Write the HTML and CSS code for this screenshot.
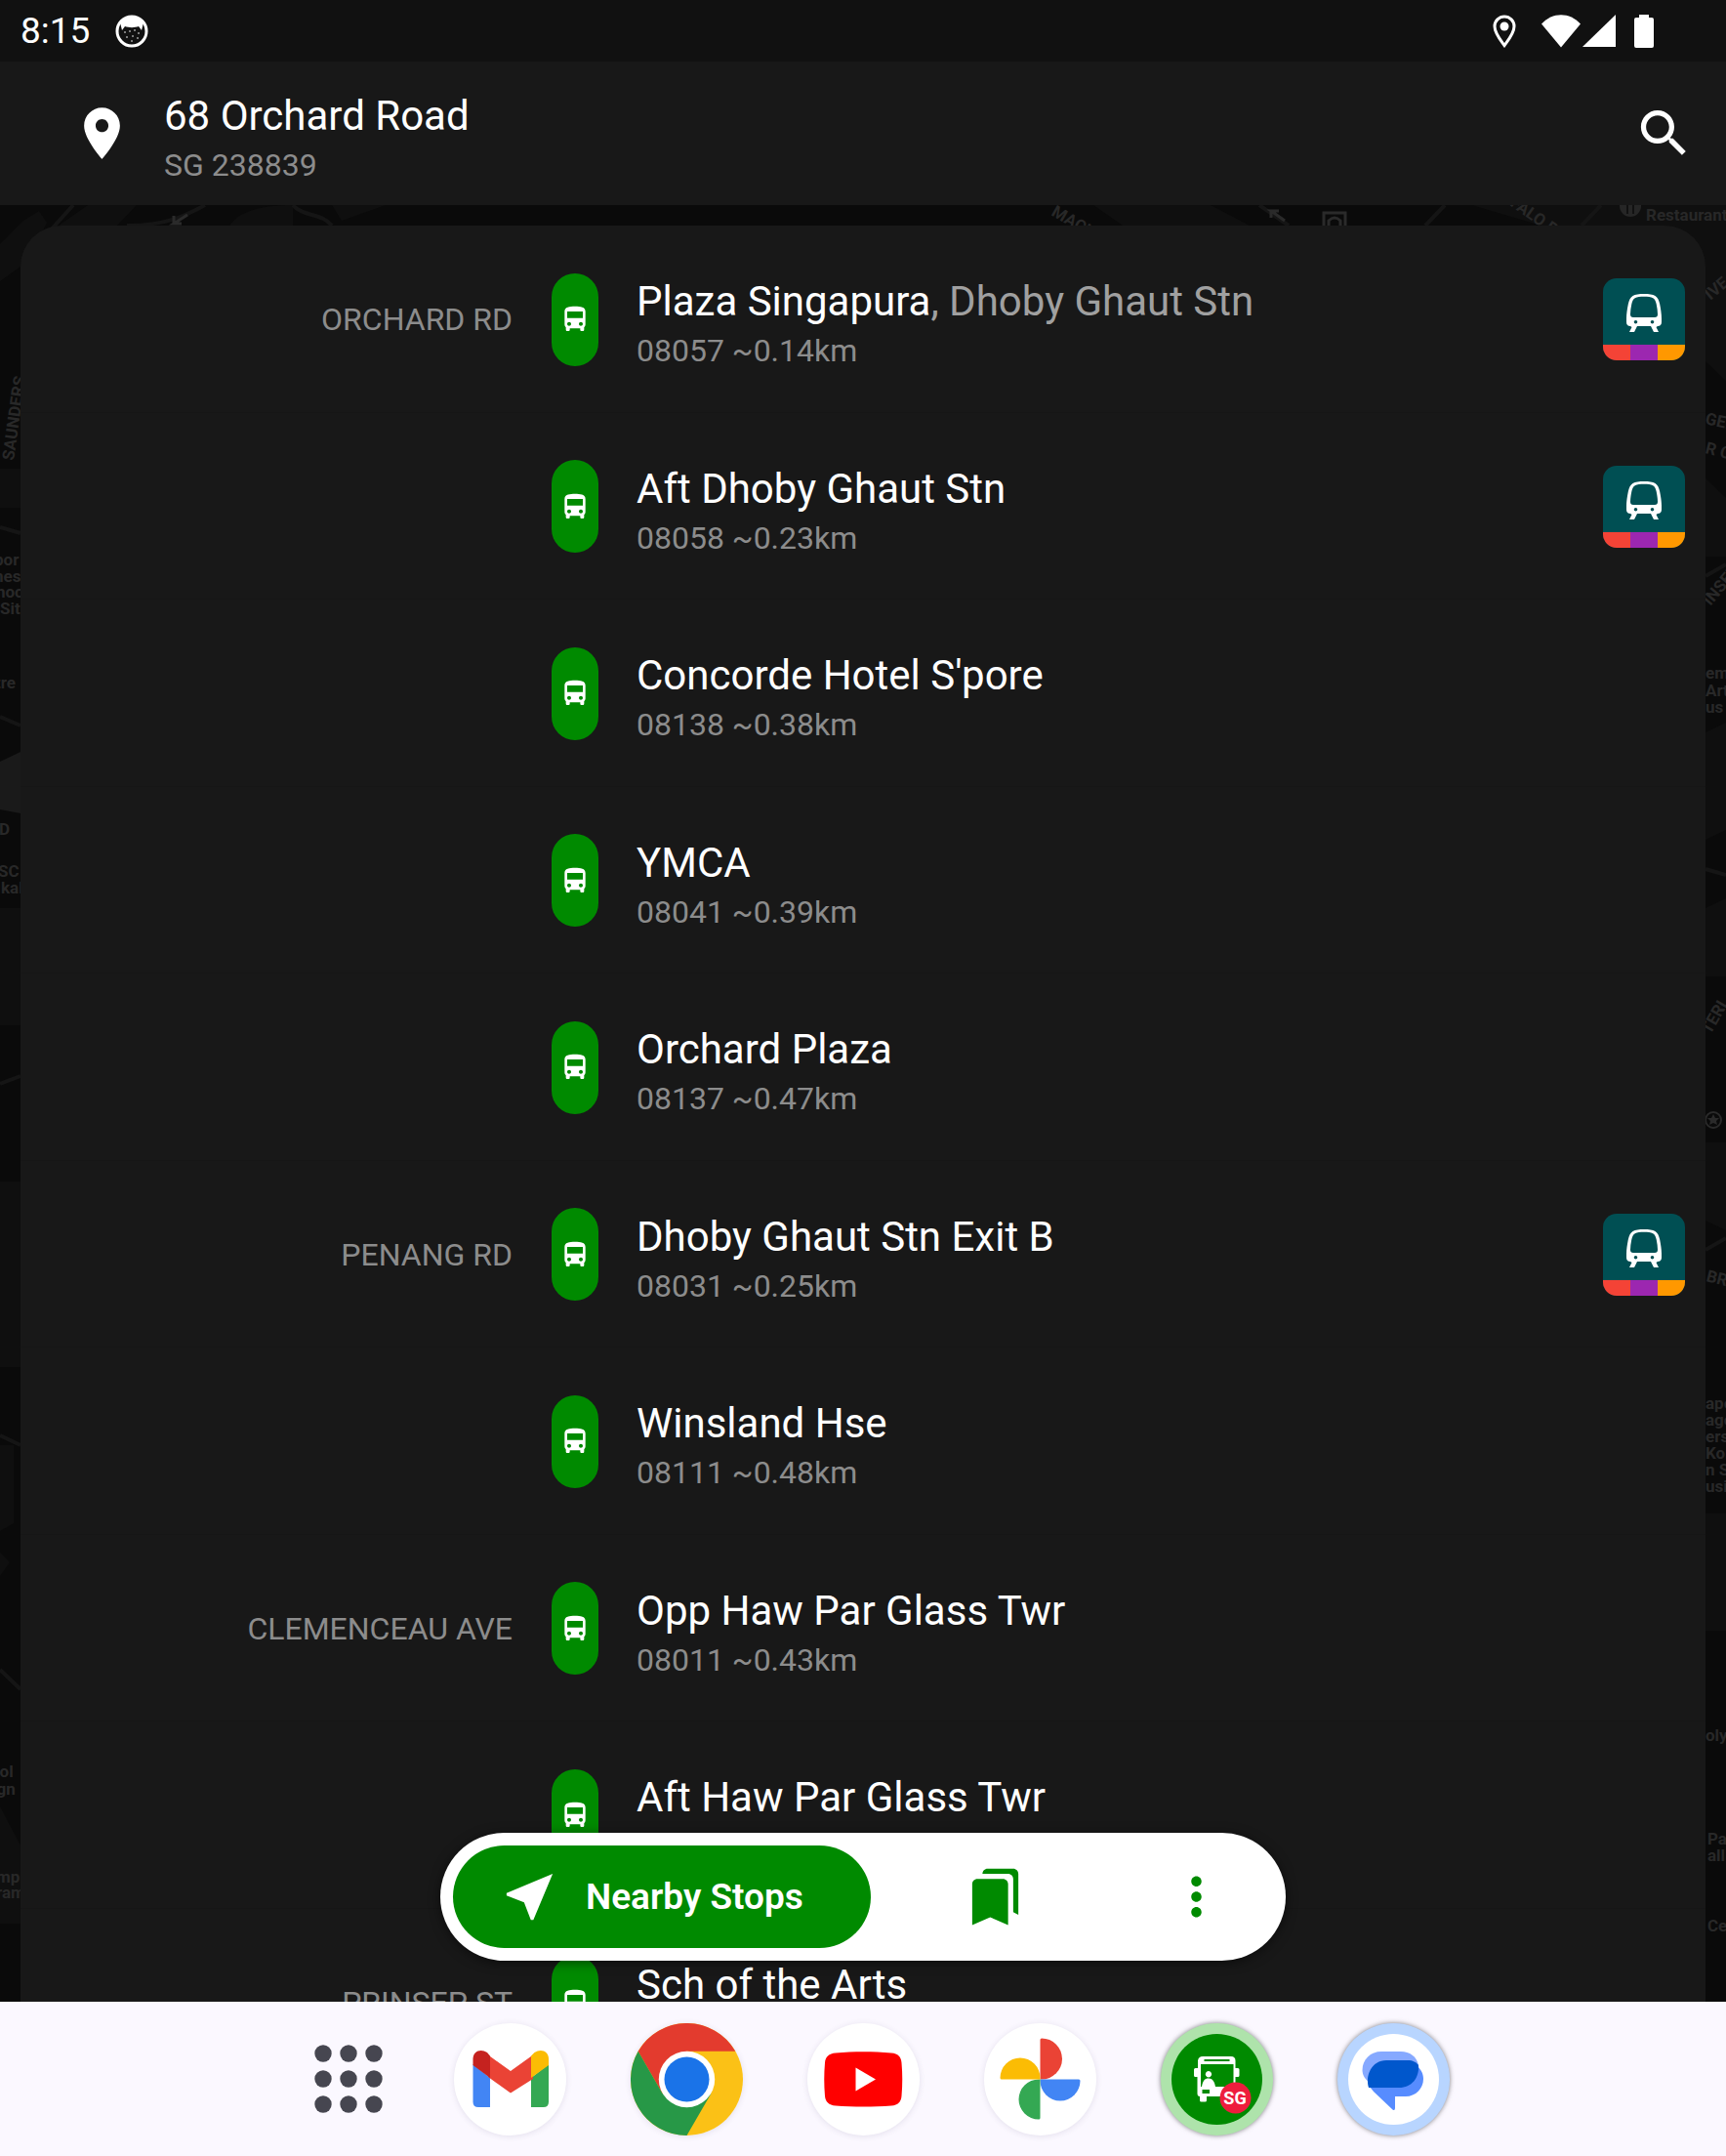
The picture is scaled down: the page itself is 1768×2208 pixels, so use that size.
FILE: index.html
```html
<!DOCTYPE html>
<html lang="en">
<head>
  <meta charset="UTF-8" />
  <meta name="viewport" content="width=device-width, initial-scale=1.0" />
  <title>Nearby Stops</title>
  <link rel="stylesheet" href="styles.css">
</head>
<body>
  <!-- shared icons -->
  <svg class="sprite" aria-hidden="true">
    <symbol id="bus" viewBox="0 0 24 24">
      <path d="M4 16c0 .88.39 1.67 1 2.22V20c0 .55.45 1 1 1h1c.55 0 1-.45 1-1v-1h8v1c0 .55.45 1 1 1h1c.55 0 1-.45 1-1v-1.78c.61-.55 1-1.34 1-2.22V6c0-3.500-3.580-4-8-4s-8 .5-8 4v10zm3.500 1c-.83 0-1.500-.67-1.500-1.500S6.670 14 7.500 14s1.500.67 1.500 1.500S8.330 17 7.500 17zm9 0c-.83 0-1.500-.67-1.500-1.500s.67-1.500 1.500-1.500 1.500.67 1.500 1.500-.67 1.500-1.500 1.500zm1.500-6H6V6h12v5z"/>
    </symbol>
    <symbol id="mrt" viewBox="0 0 84 84">
      <path fill="#004f53" d="M0 0h84v84H0z"/>
      <path fill="#f44336" d="M0 68h28v16H0z"/>
      <path fill="#9c27b0" d="M28 68h28v16H28z"/>
      <path fill="#ff9800" d="M56 68h28v16H56z"/>
      <path fill="#fff" fill-rule="evenodd" d="M42 16c5 0 9 .6 11.500 2 2.500 1.500 3.800 4.500 4.700 8.500.9 4.500 1.800 10 1.800 14.500v4c0 2.500-1.500 4-4 4l-1.500 1 2.500 5h-5l-3-6H35l-3 6h-5l2.500-5-1.500-1c-2.500 0-4-1.500-4-4v-4c0-4.500.9-10 1.800-14.500.9-4 2.200-7 4.700-8.500C33 16.600 37 16 42 16zm0 2.800c-4 0-7 .4-9.200 1.400-2 1-2.900 3.300-3.500 6.300-.7 3.500-1.300 7-1.300 10.500 0 2 1 3 3 3h22c2 0 3-1 3-3 0-3.500-.6-7-1.300-10.500-.6-3-1.500-5.300-3.500-6.300-2.200-1-5.200-1.400-9.200-1.400zM33.500 43a1.800 1.800 0 1 0 0 3.600 1.800 1.800 0 0 0 0-3.600zm17 0a1.800 1.800 0 1 0 0 3.600 1.800 1.800 0 0 0 0-3.600z"/>
    </symbol>
  </svg>

  <div class="status-bar">
    <span>8:15</span>
    <svg class="cat" viewBox="0 0 34 34" width="34" height="34">
      <circle cx="17" cy="17" r="15" fill="#111" stroke="#fff" stroke-width="3"/>
      <path fill="#fff" d="M9 4c4-3 12-3 16 0l4 4-2 8-3-4c-4 1.500-10 1.500-14 0l-3 4-2-8z"/>
      <g fill="#fff"><circle cx="10" cy="18" r=".8"/><circle cx="15" cy="17" r=".8"/><circle cx="20" cy="16" r=".8"/><circle cx="24" cy="19" r=".8"/><circle cx="12" cy="23" r=".8"/><circle cx="18" cy="22" r=".8"/><circle cx="23" cy="24" r=".8"/><circle cx="17" cy="27" r=".8"/></g>
    </svg>
    <div class="status-icons">
      <svg viewBox="0 0 24 34" width="24" height="34">
        <path fill="none" stroke="#fff" stroke-width="3" d="M12 31.500C8 26 2 19 2 12a10 10 0 0 1 20 0c0 7-6 14-10 19.500z"/>
        <circle cx="12" cy="12" r="4.500" fill="#fff"/>
      </svg>
      <svg class="wifi" viewBox="0 0 40 34" width="40" height="34"><path fill="#fff" d="M20 33.500 0 9.500C11-3 29-3 40 9.500z"/></svg>
      <svg class="cell" viewBox="0 0 34 34" width="34" height="34"><path fill="#fff" d="M34 0v33H0z"/></svg>
      <svg viewBox="0 0 20 34" width="20" height="34"><path fill="#fff" d="M5 0h10v3h3q2 0 2 2v27q0 2-2 2H2q-2 0-2-2V5q0-2 2-2h3z"/></svg>
    </div>
  </div>

  <header class="toolbar">
    <svg class="icon" viewBox="0 0 24 24"><path d="M12 2C8.130 2 5 5.130 5 9c0 5.250 7 13 7 13s7-7.750 7-13c0-3.870-3.130-7-7-7zm0 9.500c-1.380 0-2.500-1.120-2.500-2.500s1.120-2.500 2.500-2.500 2.500 1.120 2.500 2.500-1.120 2.500-2.500 2.500z"/></svg>
    <div class="place">
      <h1 class="name">68 Orchard Road</h1>
      <p class="info">SG 238839</p>
    </div>
    <button class="icon-btn" aria-label="Search">
      <svg class="icon" viewBox="0 0 24 24"><path d="M15.500 14h-.79l-.28-.27C15.410 12.590 16 11.110 16 9.500 16 5.910 13.090 3 9.500 3S3 5.910 3 9.500 5.910 16 9.500 16c1.610 0 3.090-.59 4.230-1.570l.27.28v.79l5 4.990L20.490 19l-4.990-5zm-6 0C7.010 14 5 11.990 5 9.500S7.010 5 9.500 5 14 7.010 14 9.500 11.990 14 9.500 14z"/></svg>
    </button>
  </header>

  <main>
    <!-- dimmed street map behind the list -->
    <svg class="map" viewBox="0 0 1768 1840" preserveAspectRatio="xMidYMin slice" aria-hidden="true">
      <g fill="#0f0f0f">
        <path d="M24 16l16-10 8 12-20 40-28 20V40zM90 0h50l-20 21H60zM235 21c10-14 30-21 65-21v21zM340 0l10 16 45-16zM1120 0h120l40 21H1150zM1400 0h368v100l-60-40-200-60z"/>
        <path d="M0 270h21v40H0zM0 590l21-12v40H0zM0 720h21v120H0zM0 1000h21v190H0zM0 1270l14 0v80l-14 8zM0 1380l10 10-10 14zM0 1640l21 40v80H0z"/>
        <path d="M1747 60h21v120l-21-20zM1747 280l21 20v60h-21zM1747 540l21-10v110l-21 10zM1747 720l21-10v80h-21zM1747 960h21v90l-21-10zM1747 1340h21v120h-21z"/>
      </g>
      <path fill="#1a1a1a" d="M0 570l21-10v63l-21-4z"/>
      <g fill="none" stroke="#151515" stroke-width="4">
        <path d="M75 0 48 30M130 21c40 0 60-10 80-21M300 0c10 12 30 8 40 21M0 330l21 6M0 524l21 9M0 900l21-8M0 1260l21 10M0 1500l21 20M1290 0l30 21M1480 0l-20 21M1640 0l-20 21M1747 380l21-12M1747 680l21 6M1747 1070l21-12"/>
      </g>
      <g fill="none" stroke="#2a2a2a" stroke-width="3">
        <path d="M192 10l-14 9h8m-8 0v-8M1316 16l-14-10h8m-8 0v7"/>
        <path d="M1356 24v-16h22v16M1361 24v-8q6-6 12 0v8"/>
      </g>
      <circle cx="1670" cy="1" r="11" fill="#262626"/>
      <path stroke="#111" stroke-width="2" d="M1667 0v9M1673 0v9"/>
      <circle cx="1755" cy="937" r="8" fill="none" stroke="#2a2a2a" stroke-width="2"/>
      <path fill="#2a2a2a" d="m1755 931 2 4h4l-3 3 1 4-4-2-4 2 1-4-3-3h4z"/>
      <g class="map-labels">
        <text x="1686" y="16">Restaurant</text>
        <text transform="translate(1076 10) rotate(30)">MACKENZIE</text>
        <text transform="translate(1546 0) rotate(35)">FALO RD</text>
        <text transform="translate(14 262) rotate(-82)">SAUNDERS</text>
        <text x="-6" y="369">por</text>
        <text x="-6" y="386">nes</text>
        <text x="-4" y="402">hoo</text>
        <text x="0" y="419">Sit</text>
        <text x="-5" y="495">tre</text>
        <text x="-1" y="645">D</text>
        <text x="-2" y="688">SC</text>
        <text x="1" y="705">kal</text>
        <text x="-10" y="1610">ool</text>
        <text x="-8" y="1628">ign</text>
        <text x="-4" y="1718">mp</text>
        <text x="-4" y="1734">ram</text>
        <text transform="translate(1752 98) rotate(-40)">IVE</text>
        <text transform="translate(1746 224) rotate(12)">GEL</text>
        <text transform="translate(1746 254) rotate(14)">R C</text>
        <text transform="translate(1752 411) rotate(-50)">INSEP</text>
        <text x="1747" y="485">emy</text>
        <text x="1747" y="503">Arts</text>
        <text x="1747" y="520">us 3</text>
        <text transform="translate(1752 850) rotate(-60)">TERL</text>
        <text transform="translate(1747 1102) rotate(14)">BRA</text>
        <text x="1747" y="1233">ape</text>
        <text x="1747" y="1250">age</text>
        <text x="1747" y="1267">ers</text>
        <text x="1747" y="1284">Kor</text>
        <text x="1747" y="1301">n S</text>
        <text x="1747" y="1318">usin</text>
        <text x="1747" y="1573">olym</text>
        <text x="1749" y="1679">Pa</text>
        <text x="1749" y="1696">all</text>
        <text x="1749" y="1768">Ce</text>
      </g>
    </svg>

    <ul class="stops">
      <li>
        <h2 class="road">ORCHARD RD</h2>
        <span class="pill"><svg><use href="#bus"/></svg></span>
        <div class="place"><p class="name">Plaza Singapura<span class="alt">, Dhoby Ghaut Stn</span></p><p class="info">08057 ~0.14km</p></div>
        <svg class="mrt"><use href="#mrt"/></svg>
      </li>
      <li>
        <span class="pill"><svg><use href="#bus"/></svg></span>
        <div class="place"><p class="name">Aft Dhoby Ghaut Stn</p><p class="info">08058 ~0.23km</p></div>
        <svg class="mrt"><use href="#mrt"/></svg>
      </li>
      <li>
        <span class="pill"><svg><use href="#bus"/></svg></span>
        <div class="place"><p class="name">Concorde Hotel S'pore</p><p class="info">08138 ~0.38km</p></div>
      </li>
      <li>
        <span class="pill"><svg><use href="#bus"/></svg></span>
        <div class="place"><p class="name">YMCA</p><p class="info">08041 ~0.39km</p></div>
      </li>
      <li>
        <span class="pill"><svg><use href="#bus"/></svg></span>
        <div class="place"><p class="name">Orchard Plaza</p><p class="info">08137 ~0.47km</p></div>
      </li>
      <li>
        <h2 class="road">PENANG RD</h2>
        <span class="pill"><svg><use href="#bus"/></svg></span>
        <div class="place"><p class="name">Dhoby Ghaut Stn Exit B</p><p class="info">08031 ~0.25km</p></div>
        <svg class="mrt"><use href="#mrt"/></svg>
      </li>
      <li>
        <span class="pill"><svg><use href="#bus"/></svg></span>
        <div class="place"><p class="name">Winsland Hse</p><p class="info">08111 ~0.48km</p></div>
      </li>
      <li>
        <h2 class="road">CLEMENCEAU AVE</h2>
        <span class="pill"><svg><use href="#bus"/></svg></span>
        <div class="place"><p class="name">Opp Haw Par Glass Twr</p><p class="info">08011 ~0.43km</p></div>
      </li>
      <li>
        <span class="pill"><svg><use href="#bus"/></svg></span>
        <div class="place"><p class="name">Aft Haw Par Glass Twr</p></div>
      </li>
      <li>
        <h2 class="road">PRINSEP ST</h2>
        <span class="pill"><svg><use href="#bus"/></svg></span>
        <div class="place"><p class="name">Sch of the Arts</p></div>
      </li>
    </ul>

    <nav class="bottom-nav">
      <button class="tab active">
        <svg class="icon" viewBox="0 0 24 24"><path d="M21 3 3 10.530v.98l6.840 2.650L12.480 21h.98L21 3z"/></svg>
        Nearby Stops
      </button>
      <button class="tab" aria-label="Bookmarks">
        <svg class="icon" viewBox="0 0 24 24"><path d="M19 18l2 1V3c0-1.100-.9-2-2-2H8.990C7.890 1 7 1.900 7 3h10c1.100 0 2 .9 2 2v13zM15 5H5c-1.100 0-2 .9-2 2v16l7-3 7 3V7c0-1.100-.9-2-2-2z"/></svg>
      </button>
      <button class="tab" aria-label="More">
        <svg class="icon" viewBox="0 0 24 24"><path d="M12 8c1.100 0 2-.9 2-2s-.9-2-2-2-2 .9-2 2 .9 2 2 2zm0 2c-1.100 0-2 .9-2 2s.9 2 2 2 2-.9 2-2-.9-2-2-2zm0 6c-1.100 0-2 .9-2 2s.9 2 2 2 2-.9 2-2-.9-2-2-2z"/></svg>
      </button>
    </nav>
  </main>

  <footer class="taskbar">
    <button class="all-apps" aria-label="All apps">
      <svg viewBox="0 0 70 70" width="70" height="70" fill="#464650">
        <circle cx="9" cy="9" r="8.700"/><circle cx="35" cy="9" r="8.700"/><circle cx="61" cy="9" r="8.700"/>
        <circle cx="9" cy="35" r="8.700"/><circle cx="35" cy="35" r="8.700"/><circle cx="61" cy="35" r="8.700"/>
        <circle cx="9" cy="61" r="8.700"/><circle cx="35" cy="61" r="8.700"/><circle cx="61" cy="61" r="8.700"/>
      </svg>
    </button>
    <button class="app" aria-label="Gmail">
      <svg viewBox="0 0 115 115">
        <path fill="#4285f4" d="M19.500 42 37 56v30H25q-5.500 0-5.500-5.500z"/>
        <path fill="#34a853" d="M97 42 79 56v30h12.500q5.500 0 5.500-5.500z"/>
        <path fill="#ea4335" d="M35 32.500 58 49l23-16.500V57L58 71.500 35 55z"/>
        <path fill="#c5221f" d="M19.500 43v-6.500c0-8 8-11 14.500-6.500l3 3.500V56z"/>
        <path fill="#fbbc04" d="M97 43v-6.500c0-8-8-11-14.500-6.500L79 33.500V56z"/>
      </svg>
    </button>
    <button class="app" aria-label="Chrome">
      <svg viewBox="0 0 115 115">
        <circle cx="57.500" cy="57.500" r="57.500" fill="#fbc116"/>
        <path fill="#e33b2e" d="M7.700 28.750A57.500 57.500 0 0 1 107.300 28.750H57.500L32.600 71.900z"/>
        <path fill="#279847" d="M7.700 28.750A57.500 57.500 0 0 0 57.500 115L82.400 71.900 57.500 80 32.600 71.900z"/>
        <circle cx="57.500" cy="57.500" r="28.700" fill="#fff"/>
        <circle cx="57.500" cy="57.500" r="23" fill="#1a73e8"/>
      </svg>
    </button>
    <button class="app" aria-label="YouTube">
      <svg viewBox="0 0 115 115">
        <path fill="red" d="M29 30.500c18-1.800 39-1.800 57 0 7 .5 10 4 10.500 10 1 11 1 23 0 34-.5 6-3.500 9.500-10.500 10-18 1.300-39 1.300-57 0-7-.5-10.500-4-11-10-1-11-1-23 0-34 .5-6 4-9.500 11-10z"/>
        <path fill="#fff" d="M49.500 45.500v24l20.500-12z"/>
      </svg>
    </button>
    <button class="app" aria-label="Photos">
      <svg viewBox="0 0 115 115">
        <path fill="#ea4335" d="M57.500 57.500V17q0-1.500 1.500-1.500a21 21 0 0 1 0 42z"/>
        <path fill="#4285f4" d="M57.500 57.500H97q1.500 0 1.500 1.500a20.500 20.500 0 0 1-41 0z"/>
        <path fill="#34a853" d="M57.500 57.500V97q0 1.500-1.500 1.500a20.500 20.500 0 0 1 0-41z"/>
        <path fill="#fbbc04" d="M57.500 57.500H18q-1.500 0-1.500-1.500a20.500 20.500 0 0 1 41 0z"/>
      </svg>
    </button>
    <button class="app bus-app" aria-label="SG Buses">
      <svg viewBox="0 0 115 115">
        <circle cx="57.500" cy="57.500" r="46.500" fill="#008a00"/>
        <path fill="#fff" fill-rule="evenodd" d="M43 34h29q4.500 0 4.500 4.500V46h2.500q1.500 0 1.500 1.500v6q0 1.500-1.500 1.500h-2.500v20H47v4q0 1.500-1.500 1.500h-4q-1.500 0-1.500-1.500v-4q-2.500 0-2.500-3V55H35.500Q34 55 34 53.500v-6Q34 46 35.500 46h2.500v-7.500Q38.500 34 43 34zm1.500 3v2h26v-2zM41 42v23h33.500V42zm1.500 26v4h7.500v-4z"/>
        <path fill="#fff" d="M49 49a3.200 3.200 0 1 1-.1 0zM42 65c1-6 3-8.500 7-8.500s6 3 7 8.500z"/>
        <circle cx="76.500" cy="76.500" r="16" fill="#ee1d3d"/>
        <text class="sg" x="76" y="83" text-anchor="middle">SG</text>
      </svg>
    </button>
    <button class="app msg-app" aria-label="Messages">
      <svg viewBox="0 0 115 115">
        <circle cx="57.500" cy="57.500" r="46.500" fill="#fff"/>
        <path fill="#578cff" d="M80 43c5 3 8 8 8 14 0 10-8 18-18 18H59v12q0 3-2.500 1.500L37 70c-4-4-6-9-6-13z"/>
        <path fill="#86a9ff" d="M45 29h20c9 0 16 5 18 14L33 61c-5-4-7.500-8-7.500-13 0-11 8.500-19 19.500-19z"/>
        <path fill="#0057cc" d="M50 38h22c5 0 9 2 11 5 1 13-7 23-20 23H32c-4-12 3-28 18-28z"/>
      </svg>
    </button>
  </footer>
</body>
</html>
```

FILE: styles.css
```css
* {
  box-sizing: border-box;
  margin: 0;
  padding: 0;
}

body {
  display: flex;
  flex-direction: column;
  height: 100vh;
  background: #0a0a0a;
  color: #fff;
  font-family: Roboto, "Liberation Sans", sans-serif;
  overflow: hidden;
}

button {
  border: none;
  background: none;
  color: inherit;
  font-family: inherit;
  cursor: pointer;
}

svg {
  display: block;
}

.sprite {
  position: absolute;
  width: 0;
  height: 0;
}

.icon {
  width: 63px;
  height: 63px;
  fill: currentColor;
}

/* status bar */
.status-bar {
  display: flex;
  align-items: center;
  flex-shrink: 0;
  height: 63px;
  padding: 0 74px 0 21px;
  background: #111;
  font-size: 37px;
}

.cat {
  margin-left: 26px;
}

.status-icons {
  display: flex;
  margin-left: auto;
}

.wifi {
  margin-left: 26px;
}

.cell {
  margin: 0 19px 0 2px;
}

/* toolbar */
.toolbar {
  display: flex;
  align-items: center;
  flex-shrink: 0;
  height: 147px;
  padding: 0 32px 0 73px;
  background: #181818;
}

.toolbar .place {
  flex: 1;
  margin-left: 32px;
}

.name {
  font-size: 42px;
  font-weight: 400;
  line-height: 64px;
  white-space: nowrap;
}

.alt {
  color: #a0a0a0;
}

.info {
  font-size: 32px;
  line-height: 36px;
  color: #8c8c8c;
}

/* stops list over the map */
main {
  position: relative;
  flex: 1;
  min-height: 0;
  padding: 21px 21px 0;
  overflow: hidden;
}

.map {
  position: absolute;
  top: 0;
  left: 0;
  width: 100%;
}

.map-labels {
  fill: #282828;
  font-size: 17px;
  font-weight: 700;
}

.stops {
  position: relative;
  list-style: none;
  background: #181818;
  border-radius: 42px 42px 0 0;
}

.stops li {
  display: grid;
  grid-template-columns: 544px 48px 1fr 84px;
  align-items: center;
  height: 192px;
  padding-right: 21px;
  box-shadow: inset 0 -1px #161616;
}

.stops li:nth-child(even) {
  height: 191px;
}

.road {
  grid-column: 1;
  padding-right: 40px;
  color: #8c8c8c;
  font-size: 32px;
  font-weight: 400;
  text-align: right;
}

.pill {
  grid-column: 2;
  display: flex;
  align-items: center;
  justify-content: center;
  height: 95px;
  border-radius: 24px;
  background: #008a00;
}

.pill svg {
  width: 32px;
  height: 32px;
  fill: #fff;
}

.stops .place {
  grid-column: 3;
  min-height: 100px;
  padding-left: 39px;
}

.mrt {
  grid-column: 4;
  width: 84px;
  height: 84px;
  border-radius: 14px;
}

/* floating navigation */
.bottom-nav {
  position: absolute;
  bottom: 42px;
  left: 50%;
  display: flex;
  gap: 48px;
  padding: 13px;
  border-radius: 66px;
  background: #fff;
  box-shadow: 0 2px 12px rgba(0, 0, 0, 0.5);
  transform: translateX(-50%);
}

.tab {
  display: flex;
  align-items: center;
  justify-content: center;
  width: 158px;
  height: 105px;
  color: #008a00;
}

.tab.active {
  justify-content: flex-start;
  gap: 26px;
  width: 428px;
  padding-left: 47px;
  border-radius: 53px;
  background: #008a00;
  color: #fff;
  font-size: 37px;
  font-weight: 600;
}

/* taskbar */
.taskbar {
  display: flex;
  align-items: center;
  justify-content: center;
  flex-shrink: 0;
  gap: 66px;
  height: 158px;
  background: #fbf8ff;
}

.all-apps {
  width: 115px;
  padding-left: 38px;
}

.app {
  width: 115px;
  height: 115px;
  border-radius: 50%;
  background: #fff;
  box-shadow: 0 1px 6px rgba(60, 50, 100, 0.12);
}

.bus-app {
  background: #aee3ab;
  box-shadow: 0 0 5px rgba(0, 0, 0, 0.5);
}

.msg-app {
  background: #b8d5ff;
  box-shadow: 0 0 5px rgba(0, 0, 0, 0.5);
}

.sg {
  fill: #fff;
  font-size: 18px;
  font-weight: 700;
}
```
